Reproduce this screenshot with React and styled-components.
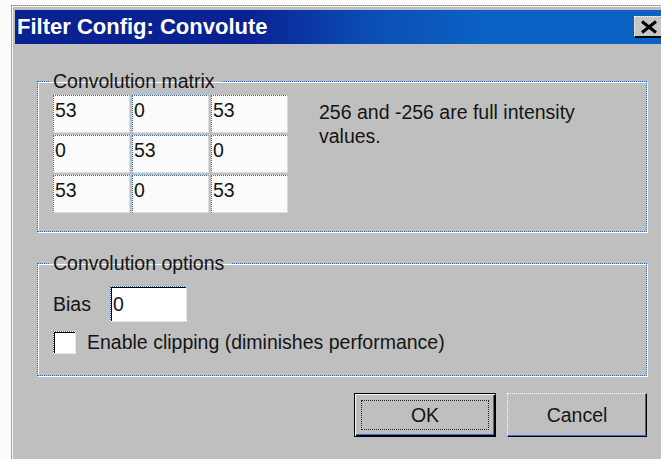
import styled, { createGlobalStyle, css } from "styled-components";

const GlobalStyle = createGlobalStyle`
  html, body {
    margin: 0;
    padding: 0;
  }
  body {
    background: #fcfcfc;
    overflow: hidden;
    font-family: "Liberation Sans", Arial, sans-serif;
    color: #151515;
  }
`;

const dotBlue = "#2a6fcf";

const Window = styled.div`
  margin: 5px 0 0 11px;
  width: 663px;
  min-height: 470px;
  box-sizing: border-box;
  padding: 4px 3px 3px;
  background: #bfbfbf;
  border-top: 1px dotted #8a8a8a;
  border-left: 1px dotted #8a8a8a;
  box-shadow: inset 1px 1px 0 #f2f2f2;
`;

const TitleBar = styled.div`
  display: flex;
  align-items: center;
  height: 34px;
  padding-left: 2px;
  background: linear-gradient(
    90deg,
    #0a2192 0%,
    #0a2192 35%,
    #0b4fb6 55%,
    #0b62c4 72%,
    #0b62c4 100%
  );
`;

const Title = styled.span`
  color: #fff;
  font-size: 22px;
  font-weight: 700;
  line-height: 1;
`;

const CloseButton = styled.button`
  margin-left: auto;
  margin-right: 7px;
  width: 30px;
  height: 22px;
  padding: 0;
  box-sizing: border-box;
  background: #c6c6c6;
  border-style: dotted solid solid dotted;
  border-width: 1px 1px 2px 1px;
  border-color: #fff #000 #000 #fff;
  display: flex;
  align-items: center;
  justify-content: center;
`;

const Body = styled.div`
  padding: 26px 0 0 22px;
  width: 610px;
`;

const Group = styled.fieldset`
  margin: ${(p) => p.$gap || 0}px 0 0;
  padding: ${(p) => p.$top}px 15px ${(p) => p.$bottom}px;
  min-inline-size: 0;
  box-sizing: border-box;
  width: 610px;
  border: 1px dotted ${dotBlue};
  box-shadow: 1px 1px 0 #fff, inset 1px 1px 0 #fff;
`;

const Legend = styled.legend`
  margin-left: -4px;
  padding: 0 8px 0 4px;
  font-size: 19.5px;
  line-height: 22px;
`;

const MatrixRow = styled.div`
  display: flex;
  align-items: flex-start;
`;

const Matrix = styled.div`
  display: grid;
  grid-template-columns: repeat(3, 77px);
  grid-auto-rows: 38px;
  gap: 2px;
`;

const Cell = styled.div`
  box-sizing: border-box;
  background: #fbfbfb;
  border-top: 1px dotted ${dotBlue};
  border-left: 1px dotted ${dotBlue};
  border-right: 1px solid #dcdcdc;
  border-bottom: 1px solid #dcdcdc;
  padding: 3px 0 0 1px;
  font-size: 19.5px;
  line-height: 22px;
`;

const Note = styled.p`
  margin: 5px 0 0 31px;
  width: 290px;
  font-size: 19.5px;
  line-height: 24px;
`;

const sunken = css`
  box-sizing: border-box;
  background: #fff;
  border-style: dotted;
  border-width: 1px;
  border-color: ${dotBlue} #cfcfcf #cfcfcf ${dotBlue};
  box-shadow: inset 1px 1px 0 #000;
`;

const FieldRow = styled.div`
  display: flex;
  align-items: center;
  gap: ${(p) => p.$gap}px;
  margin-top: ${(p) => p.$top || 0}px;
  font-size: 19.5px;
`;

const Field = styled.div`
  ${sunken};
  width: 77px;
  height: 36px;
  display: flex;
  align-items: center;
  padding-left: 2px;
`;

const Check = styled.span`
  ${sunken};
  width: 23px;
  height: 23px;
`;

const Actions = styled.div`
  display: flex;
  justify-content: flex-end;
  gap: 11px;
  margin-top: 17px;
`;

const Button = styled.button`
  width: ${(p) => p.$w}px;
  height: 44px;
  padding: 0;
  box-sizing: border-box;
  background: #bfbfbf;
  font-family: "Liberation Sans", Arial, sans-serif;
  font-size: 19.5px;
  color: #151515;
  border-style: dotted solid solid dotted;
  border-width: 1px;
  border-color: #fff #000 #000 #fff;
  box-shadow: inset -1px -1px 0 ${dotBlue};

  ${(p) =>
    p.$default &&
    css`
      border: 1px solid #000;
      box-shadow: inset 1px 1px 0 #f4f4f4, inset -1px -1px 0 #000,
        inset -2px -2px 0 ${dotBlue};
    `}
`;

const FocusRing = styled.span`
  display: block;
  margin: 0 6px;
  height: 30px;
  line-height: 28px;
  box-sizing: border-box;
  border: 1px dotted #222;
`;

const values = [53, 0, 53, 0, 53, 0, 53, 0, 53];

export default function App() {
  return (
    <>
      <GlobalStyle />
      <Window>
        <TitleBar>
          <Title>Filter Config: Convolute</Title>
          <CloseButton>
            <svg width="18" height="14" viewBox="0 0 18 14">
              <path d="M2 1.5 L16 12.5 M16 1.5 L2 12.5" stroke="#000" strokeWidth="3" />
            </svg>
          </CloseButton>
        </TitleBar>

        <Body>
          <Group $top={3} $bottom={18}>
            <Legend>Convolution matrix</Legend>
            <MatrixRow>
              <Matrix>
                {values.map((v, i) => (
                  <Cell key={i}>{v}</Cell>
                ))}
              </Matrix>
              <Note>256 and -256 are full intensity values.</Note>
            </MatrixRow>
          </Group>

          <Group $gap={20} $top={12} $bottom={21}>
            <Legend>Convolution options</Legend>
            <FieldRow $gap={19}>
              <span>Bias</span>
              <Field>0</Field>
            </FieldRow>
            <FieldRow $gap={11} $top={9}>
              <Check />
              <span>Enable clipping (diminishes performance)</span>
            </FieldRow>
          </Group>

          <Actions>
            <Button $w={142} $default>
              <FocusRing>OK</FocusRing>
            </Button>
            <Button $w={140}>Cancel</Button>
          </Actions>
        </Body>
      </Window>
    </>
  );
}
